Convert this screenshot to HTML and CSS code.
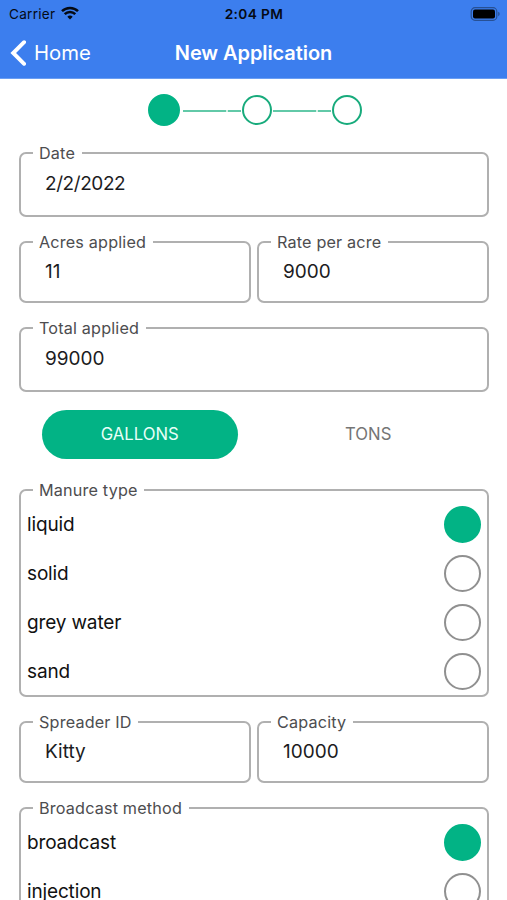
FILE: index.html
```html
<!DOCTYPE html>
<html lang="en">
<head>
<meta charset="utf-8">
<title>New Application</title>
<link rel="stylesheet" href="styles.css">
</head>
<body>
<div class="screen">
  <header class="header">
    <div class="status">
      <div class="carrier"><span>Carrier</span>
        <svg class="wifi" viewBox="0 0 18 14" width="18" height="14"><path d="M9 13.5 6.3 10.8a3.9 3.9 0 0 1 5.4 0z" fill="#050a14"/><path d="M3.7 8.1a7.5 7.5 0 0 1 10.6 0M1 5.2a11.3 11.3 0 0 1 16 0" fill="none" stroke="#050a14" stroke-width="2.5"/></svg>
      </div>
      <div class="time">2:04 PM</div>
      <div class="power">
        <svg viewBox="0 0 30 14" width="30" height="14"><rect x="1.2" y=".7" width="25.6" height="12.6" rx="3.8" fill="none" stroke="#275094" stroke-width="1.2"/><rect x="3" y="2.5" width="22" height="9" rx="2" fill="#000"/><path d="M28.2 4.8q1.5.6 1.5 2.2t-1.5 2.2z" fill="#275094"/></svg>
      </div>
    </div>
    <nav class="nav">
      <a class="back"><svg viewBox="0 0 16 26" width="16" height="26"><path d="M14.1 2.2 3.2 13l10.9 10.8" fill="none" stroke="#fff" stroke-width="3.9" stroke-linecap="round" stroke-linejoin="miter"/></svg><span>Home</span></a>
      <h1 class="title">New Application</h1>
    </nav>
  </header>

  <main class="content">
    <div class="steps">
      <i class="dot done"></i><i class="line first"></i><i class="dot"></i><i class="line"></i><i class="dot"></i>
    </div>

    <fieldset class="field tall"><legend>Date</legend><div class="value date">2/2/2022</div></fieldset>
    <div class="pair">
      <fieldset class="field"><legend>Acres applied</legend><div class="value">11</div></fieldset>
      <fieldset class="field"><legend>Rate per acre</legend><div class="value">9000</div></fieldset>
    </div>
    <fieldset class="field tall"><legend>Total applied</legend><div class="value total">99000</div></fieldset>

    <div class="toggle">
      <button class="unit active">GALLONS</button>
      <button class="unit">TONS</button>
    </div>

    <fieldset class="field group">
      <legend>Manure type</legend>
      <div class="option"><span>liquid</span><i class="radio on"></i></div>
      <div class="option"><span>solid</span><i class="radio"></i></div>
      <div class="option"><span>grey water</span><i class="radio"></i></div>
      <div class="option"><span>sand</span><i class="radio"></i></div>
    </fieldset>
    <div class="pair">
      <fieldset class="field"><legend>Spreader ID</legend><div class="value">Kitty</div></fieldset>
      <fieldset class="field"><legend>Capacity</legend><div class="value">10000</div></fieldset>
    </div>
    <fieldset class="field group">
      <legend>Broadcast method</legend>
      <div class="option"><span>broadcast</span><i class="radio on"></i></div>
      <div class="option"><span>injection</span><i class="radio"></i></div>
    </fieldset>
  </main>
</div>
</body>
</html>
```
FILE: styles.css
```css
* { box-sizing: border-box; }
body { margin: 0; background: #fff; font-family: Inter, "Liberation Sans", sans-serif; color: #1c1c1e; }
.screen { width: 507px; height: 900px; overflow: hidden; }

.header { height: 79px; background: #3c7eee; border-bottom: 1px solid #6a9ef3; }
.status { display: grid; grid-template-columns: 1fr auto 1fr; align-items: center; height: 27px; padding: 0 8px 0 9px; color: #050a14; }
.carrier { display: flex; align-items: center; gap: 6px; font-size: 13.6px; letter-spacing: .25px; }
.wifi { margin-top: -2px; }
.time { font-size: 13.7px; font-weight: 600; letter-spacing: .4px; }
.power { display: flex; justify-content: flex-end; margin-right: -1px; }
.nav { display: grid; grid-template-columns: 1fr auto 1fr; align-items: center; height: 51px; padding: 0 10px; color: #fff; }
.back { display: flex; align-items: center; gap: 8px; font-size: 20.3px; }
.title { margin: 0; font-size: 20px; font-weight: 600; letter-spacing: -.08px; }

.content { padding: 0 18px 0 19px; }
.steps { display: flex; align-items: center; justify-content: center; height: 62px; padding-left: 1px; }
.dot { width: 30px; height: 30px; border: 2.4px solid #18ab7c; border-radius: 50%; }
.dot.done { width: 32px; height: 32px; background: #02b385; border-color: #02b385; }
.line { width: 58px; height: 2px; margin: 1px 1px 0 1px; background: linear-gradient(90deg, #62c9a8 43.5px, #d5f1e7 43.5px 45px, #62c9a8 45px); }
.line.first { margin-left: 3px; }

.field { flex: 1; min-width: 0; height: 73px; margin: 0; padding: 0; border: 2px solid #b0b0b0; border-radius: 7px; }
.field.tall { height: 76px; margin-bottom: 13px; }
.field.group { height: 219px; margin-bottom: 13px; }
legend { height: 24px; margin-left: 11.5px; padding: 0 6.5px; font-size: 16.2px; letter-spacing: .17px; line-height: 24px; color: #4d4d4f; }
.value { padding: 6px 0 0 24px; font-size: 19px; line-height: 24px; }
.value.date { padding-top: 7px; margin-top: 6px; letter-spacing: -.42px; }
.value.date { margin-top: 0; }
.value.total { padding-top: 7px; }
.pair { display: flex; gap: 6px; margin-bottom: 13px; }

.toggle { display: flex; height: 49px; margin: 18px 0 19px; padding: 0 23px; gap: 33px; }
.unit { width: 196px; padding: 0 0 1px; border: 0; border-radius: 25px; background: none; color: #757575; font: 16.7px Inter, "Liberation Sans", sans-serif; }
.unit.active { background: #02b385; color: #e8fff8; }

.option { display: flex; align-items: center; justify-content: space-between; height: 49px; padding: 0 6px; font-size: 19px; letter-spacing: -.15px; color: #111; }
.option:first-of-type { margin-top: -2px; }
.radio { width: 37px; height: 37px; border: 2px solid #909090; border-radius: 50%; }
.radio.on { background: #02b385; border-color: #02b385; }
```
